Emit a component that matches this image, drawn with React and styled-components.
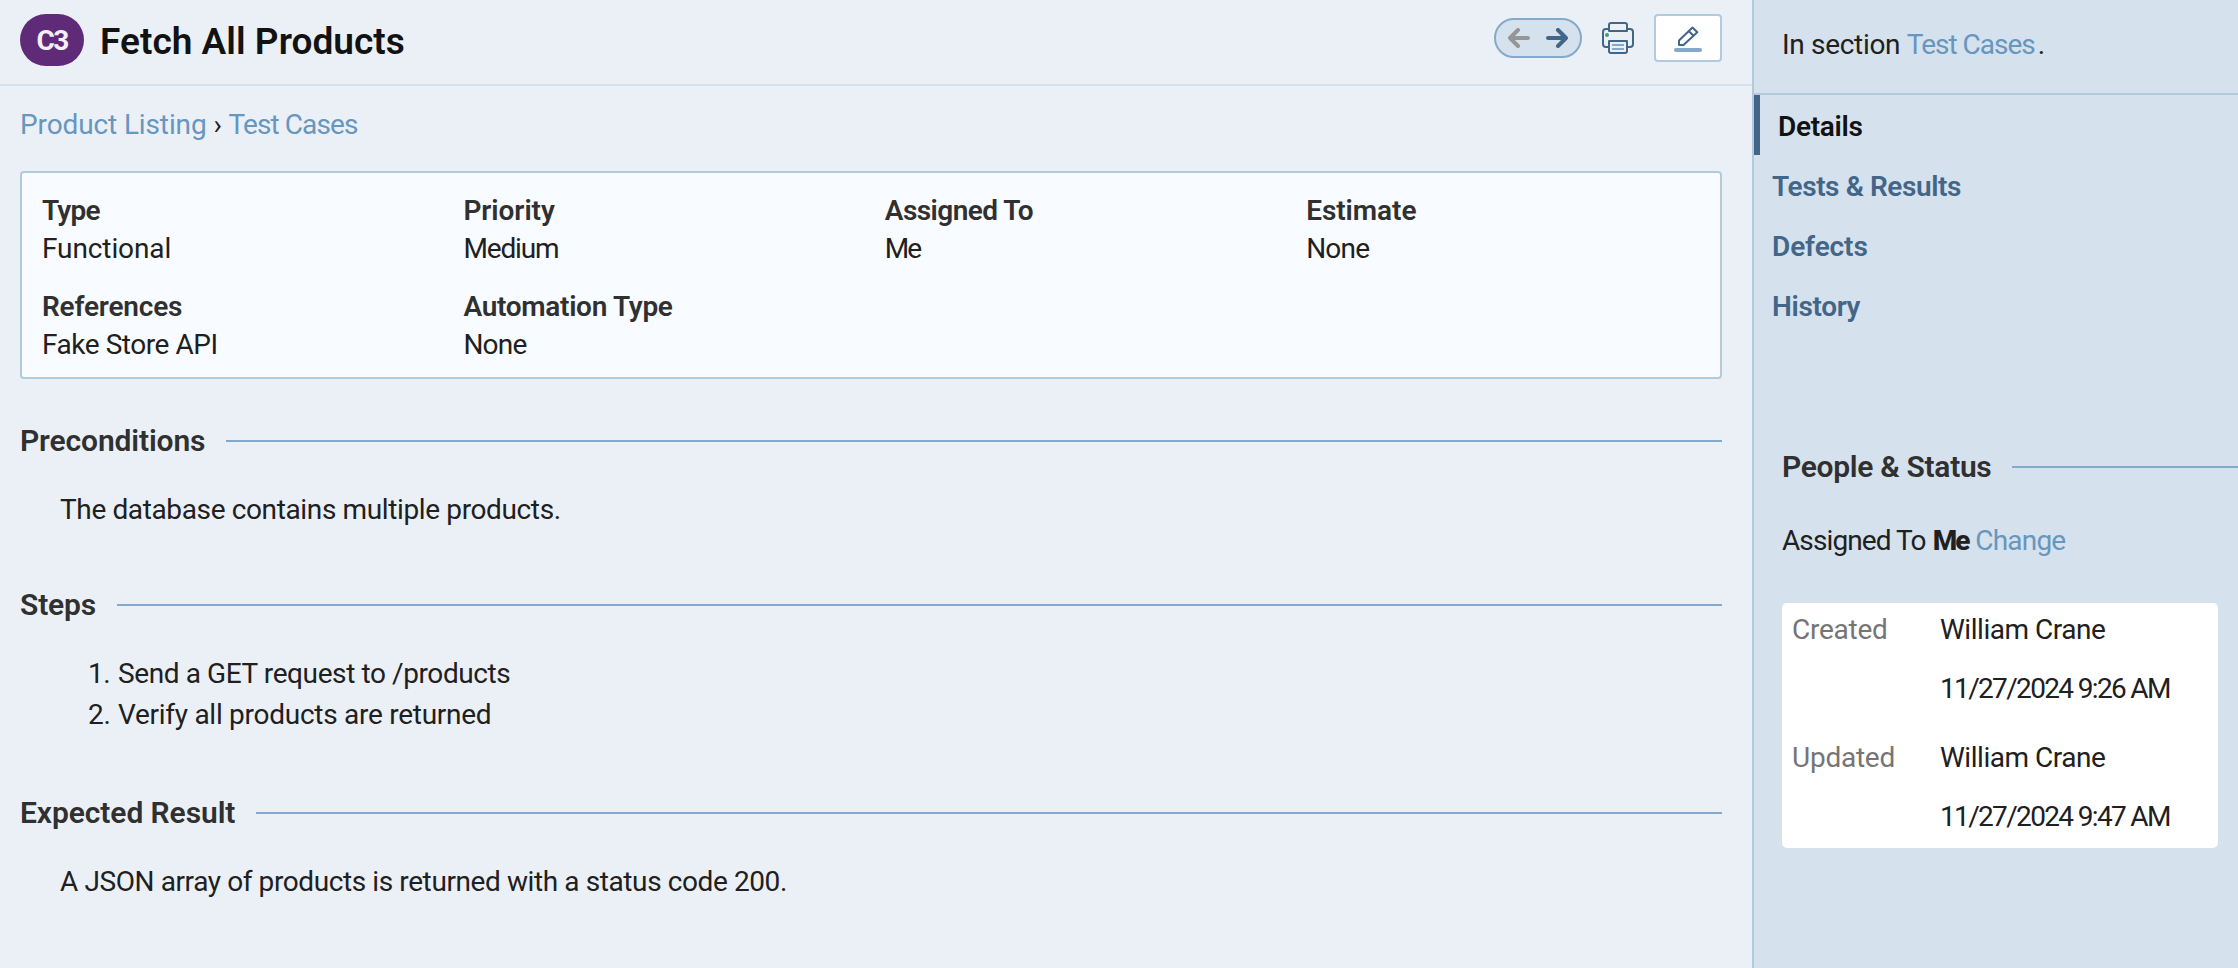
import React from "react";
import styled, { createGlobalStyle } from "styled-components";

const GlobalStyle = createGlobalStyle`
  *, *::before, *::after { box-sizing: border-box; }
  body {
    margin: 0;
    background: #ebf0f7;
    color: #202020;
    font-family: Roboto, "Liberation Sans", sans-serif;
    font-size: 28px;
    line-height: 41px;
  }
  h1, h2, p, ol, dl, dt, dd { margin: 0; padding: 0; font-weight: 400; }
`;

const Page = styled.div`
  display: flex;
  height: 968px;
  overflow: hidden;
`;

const Main = styled.main`
  width: 1752px;
  flex: none;
`;

const Text = styled.span`
  letter-spacing: ${(p) => p.$track || 0}px;
  white-space: nowrap;
`;

const Header = styled.header`
  display: flex;
  align-items: flex-start;
  justify-content: space-between;
  height: 86px;
  padding: 14px 30px 0 20px;
  border-bottom: 2px solid #d5e2ee;
`;

const TitleGroup = styled.div`
  display: flex;
  align-items: center;
  gap: 16px;
`;

const Badge = styled.span`
  display: flex;
  align-items: center;
  justify-content: center;
  width: 64px;
  height: 52px;
  padding-top: 1px;
  border-radius: 26px;
  background: #5f2b79;
  color: #f3eff5;
  font-weight: 700;
  letter-spacing: -1.6px;
`;

const Title = styled.h1`
  color: #121212;
  font-size: 37px;
  font-weight: 600;
  line-height: 52px;
  padding-top: 2px;
  height: 52px;
  letter-spacing: 0.03px;
  white-space: nowrap;
`;

const Actions = styled.div`
  display: flex;
  align-items: center;
  height: 48px;
  gap: 20px;
`;

const Pager = styled.div`
  display: flex;
  align-items: center;
  justify-content: center;
  gap: 16px;
  width: 88px;
  height: 40px;
  border: 2px solid #85a9ca;
  border-radius: 20px;
  background: #d5e1ed;
`;

const EditButton = styled.button`
  display: flex;
  align-items: center;
  justify-content: center;
  width: 68px;
  height: 48px;
  padding: 2px 0 0;
  border: 2px solid #b1cade;
  border-radius: 4px;
  background: #fff;
`;

const Icon = styled.svg`
  display: block;
  flex: none;
  fill: none;
`;

const Body = styled.div`
  padding: 18px 30px 0 20px;
`;

const Link = styled.a`
  color: #6796be;
  letter-spacing: ${(p) => p.$track || 0}px;
  white-space: nowrap;
`;

const Breadcrumb = styled.nav`
  display: flex;
  gap: 7px;
`;

const Crumb = styled.span`
  width: 8px;
  text-align: center;
`;

const Fields = styled.dl`
  display: grid;
  grid-template-columns: repeat(4, 421.4px);
  align-content: start;
  row-gap: 20px;
  height: 208px;
  margin-top: 26px;
  padding: 19px 0 0 20px;
  border: 2px solid #b1cade;
  border-radius: 4px;
  background: #f8fbff;
  line-height: 38px;
`;

const FieldLabel = styled.dt`
  color: #303030;
  font-weight: 600;
  letter-spacing: ${(p) => p.$track || 0}px;
`;

const FieldValue = styled.dd`
  letter-spacing: ${(p) => p.$track || 0}px;
`;

const Section = styled.section`
  margin-top: ${(p) => p.$gap}px;
`;

const SectionTitle = styled.h2`
  display: flex;
  align-items: center;
  color: #303030;
  font-size: 30px;
  font-weight: 600;
  line-height: 40px;
  letter-spacing: ${(p) => p.$track || 0}px;
  white-space: nowrap;

  &::after {
    content: "";
    flex: 1;
    height: 2px;
    margin-left: 21px;
    background: #85a9ca;
  }
`;

const Paragraph = styled.p`
  margin-top: 28px;
  padding-left: 40px;
  letter-spacing: ${(p) => p.$track || 0}px;
`;

const Steps = styled.ol`
  margin-top: 28px;
  padding-left: 67px;
  list-style: none;
`;

const Step = styled.li`
  display: flex;
  letter-spacing: ${(p) => p.$track || 0}px;
`;

const StepNumber = styled.span`
  width: 31px;
  padding-left: 1px;
`;

const Sidebar = styled.aside`
  flex: 1;
  border-left: 2px solid #b1cade;
  background: #d5e1ed;
`;

const SidebarHeader = styled.div`
  height: 95px;
  padding: 24px 28px 0;
  border-bottom: 2px solid #b1cade;
`;

const TabItem = styled.a`
  display: block;
  height: 60px;
  padding-left: 18px;
  border-left: ${(p) => (p.$active ? "6px solid #436688" : "0")};
  color: ${(p) => (p.$active ? "#121212" : "#436688")};
  font-weight: 600;
  line-height: 63px;
  letter-spacing: ${(p) => p.$track || 0}px;
`;

const People = styled.section`
  margin-top: 112px;
  padding-left: 28px;
`;

const Assigned = styled.p`
  display: flex;
  gap: 7px;
  margin-top: 33px;
`;

const Strong = styled.strong`
  font-weight: 800;
  letter-spacing: -2px;
`;

const Log = styled.dl`
  display: flex;
  flex-direction: column;
  gap: 28px;
  width: 436px;
  height: 245px;
  margin-top: 42px;
  padding: 6px 10px 0;
  border-radius: 5px;
  background: #fff;
`;

const LogRow = styled.div`
  display: grid;
  grid-template-columns: 148px 1fr;
`;

const LogLabel = styled.dt`
  color: #757575;
  letter-spacing: -0.25px;
`;

const LogValue = styled.dd`
  display: flex;
  flex-direction: column;
  gap: 18px;
  white-space: nowrap;
`;

const fields = [
  ["Type", "Functional", -0.8, -0.1],
  ["Priority", "Medium", -0.05, -1.15],
  ["Assigned To", "Me", -0.55, -2],
  ["Estimate", "None", -0.05, -0.8],
  ["References", "Fake Store API", -0.18, -0.46],
  ["Automation Type", "None", -0.3, -0.8],
];

const tabs = [
  ["Details", -0.3],
  ["Tests & Results", -0.42],
  ["Defects", -0.1],
  ["History", -0.35],
];

const log = [
  ["Created", "William Crane", "11/27/2024 9:26 AM"],
  ["Updated", "William Crane", "11/27/2024 9:47 AM"],
];

function Arrow({ color, flip }) {
  return (
    <Icon width="22" height="20" viewBox="0 0 22 20" stroke={color} strokeWidth="4" strokeLinecap="round" strokeLinejoin="round">
      {flip ? <path d="M20 10H2M12 2l8 8-8 8" /> : <path d="M2 10h18M10 2l-8 8 8 8" />}
    </Icon>
  );
}

function Printer() {
  return (
    <Icon width="32" height="32" viewBox="0 0 32 32" stroke="#436688" strokeWidth="2" strokeLinejoin="round">
      <path d="M7 7H4a3 3 0 0 0-3 3v12a3 3 0 0 0 3 3h3M25 7h3a3 3 0 0 1 3 3v12a3 3 0 0 1-3 3h-3" />
      <path d="M7 9V3a2 2 0 0 1 2-2h14a2 2 0 0 1 2 2v6z" />
      <path d="M7 19h18v10a2 2 0 0 1-2 2H9a2 2 0 0 1-2-2z" />
      <path d="M10 23h12M10 27h12" stroke="#85a9ca" />
      <circle cx="5" cy="13" r="2" fill="#3f9c78" stroke="none" />
    </Icon>
  );
}

function Pencil() {
  return (
    <Icon width="28" height="26" viewBox="0 0 28 26" stroke="#436688" strokeWidth="2" strokeLinejoin="round">
      <path d="M5 19v-4.500L18.500 1.500l4.800 4.800L9.500 19zM14.700 5l4.800 4.800" />
      <path d="M2 24h24" stroke="#85a9ca" strokeWidth="4" strokeLinecap="round" />
    </Icon>
  );
}

export default function App() {
  return (
    <>
      <GlobalStyle />
      <Page>
        <Main>
          <Header>
            <TitleGroup>
              <Badge>C3</Badge>
              <Title>Fetch All Products</Title>
            </TitleGroup>
            <Actions>
              <Pager>
                <Arrow color="#969696" />
                <Arrow color="#436688" flip />
              </Pager>
              <Printer />
              <EditButton aria-label="Edit">
                <Pencil />
              </EditButton>
            </Actions>
          </Header>
          <Body>
            <Breadcrumb>
              <Link $track={-0.12}>Product Listing</Link>
              <Crumb>›</Crumb>
              <Link $track={-0.9}>Test Cases</Link>
            </Breadcrumb>
            <Fields>
              {fields.map(([label, value, a, b]) => (
                <div key={label}>
                  <FieldLabel $track={a}>{label}</FieldLabel>
                  <FieldValue $track={b}>{value}</FieldValue>
                </div>
              ))}
            </Fields>
            <Section $gap={42}>
              <SectionTitle $track={-0.13}>Preconditions</SectionTitle>
              <Paragraph $track={-0.37}>The database contains multiple products.</Paragraph>
            </Section>
            <Section $gap={55}>
              <SectionTitle $track={-0.18}>Steps</SectionTitle>
              <Steps>
                <Step $track={-0.4}>
                  <StepNumber>1.</StepNumber>Send a GET request to /products
                </Step>
                <Step $track={-0.27}>
                  <StepNumber>2.</StepNumber>Verify all products are returned
                </Step>
              </Steps>
            </Section>
            <Section $gap={58}>
              <SectionTitle $track={-0.08}>Expected Result</SectionTitle>
              <Paragraph $track={-0.4}>A JSON array of products is returned with a status code 200.</Paragraph>
            </Section>
          </Body>
        </Main>
        <Sidebar>
          <SidebarHeader>
            <Text $track={-0.32}>In section </Text>
            <Link $track={-1}>Test Cases</Link>
            <Text>&#8202;.</Text>
          </SidebarHeader>
          {tabs.map(([name, track], i) => (
            <TabItem key={name} $active={i === 0} $track={track}>
              {name}
            </TabItem>
          ))}
          <People>
            <SectionTitle $track={-0.31}>People &amp; Status</SectionTitle>
            <Assigned>
              <Text $track={-0.9}>Assigned To</Text>
              <Strong>Me</Strong>
              <Link $track={-0.81}>Change</Link>
            </Assigned>
            <Log>
              {log.map(([label, who, when]) => (
                <LogRow key={label}>
                  <LogLabel>{label}</LogLabel>
                  <LogValue>
                    <Text $track={-0.47}>{who}</Text>
                    <Text $track={-1.66}>{when}</Text>
                  </LogValue>
                </LogRow>
              ))}
            </Log>
          </People>
        </Sidebar>
      </Page>
    </>
  );
}
